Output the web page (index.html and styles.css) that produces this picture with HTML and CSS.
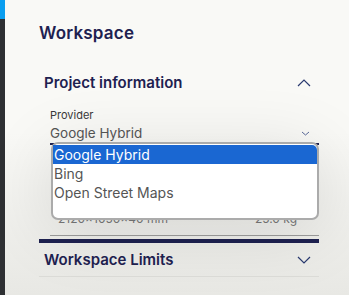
FILE: index.html
```html
<!DOCTYPE html>
<html lang="en">
<head>
    <meta charset="UTF-8">
    <meta name="viewport" content="width=device-width, initial-scale=1.0">
    <title>Workspace</title>
    <link rel="stylesheet" href="styles.css">
</head>
<body>
    <div class="rail"><div class="rail-active"></div></div>
    <div class="panel">
        <h1>Workspace</h1>

        <div class="section open">
            <div class="section-head">
                <span>Project information</span>
                <svg class="chev" width="14" height="8" viewBox="0 0 14 8"><path d="M1 7 L7 1 L13 7" fill="none" stroke="#2a3a70" stroke-width="1.2"/></svg>
            </div>
            <div class="field">
                <label>Provider</label>
                <div class="select">
                    <span>Google Hybrid</span>
                    <svg width="9" height="5" viewBox="0 0 9 5"><path d="M1 1 L4.5 4 L8 1" fill="none" stroke="#5a6a9a" stroke-width="1"/></svg>
                </div>
                <ul class="options">
                    <li class="selected">Google Hybrid</li>
                    <li>Bing</li>
                    <li>Open Street Maps</li>
                </ul>
            </div>
            <div class="spec">
                <span>2120×1050×40 mm</span>
                <span>25.0 kg</span>
            </div>
        </div>

        <div class="section">
            <div class="section-head">
                <span>Workspace Limits</span>
                <svg class="chev" width="14" height="8" viewBox="0 0 14 8"><path d="M1 1 L7 7 L13 1" fill="none" stroke="#2a3a70" stroke-width="1.2"/></svg>
            </div>
        </div>
    </div>
</body>
</html>
```

FILE: styles.css
```css
body {
    margin: 0;
    height: 295px;
    display: flex;
    font-family: Inter, "Noto Sans", sans-serif;
    color: #1e2150;
    overflow: hidden;
}
.rail {
    width: 5px;
    background-color: #2e3033;
}
.rail-active {
    height: 19px;
    background-color: #0a9ef0;
}
.panel {
    flex: 1;
    background: linear-gradient(180deg, #f9f9f6 45%, #e8e8e4 100%);
    padding: 23px 30px 0 34px;
}
h1 {
    font-size: 17px;
    font-weight: 600;
    margin: 0 0 23px 0;
    letter-spacing: 0.2px;
}
.section {
    border-top: 2px solid #1e2150;
}
.section.open {
    border-top: none;
    border-bottom: 2px solid #1e2150;
    padding-bottom: 3px;
}
.section-head {
    display: flex;
    justify-content: space-between;
    align-items: center;
    padding: 0 8px 0 5px;
    height: 33px;
    font-size: 15px;
    font-weight: 600;
}
.section + .section .section-head {
    border-bottom: 1px solid #dcdcd8;
}
.field {
    position: relative;
    margin: 9px 0 0 11px;
}
.field label {
    display: block;
    font-size: 11px;
    color: #3a3a3a;
}
.select {
    display: flex;
    justify-content: space-between;
    align-items: center;
    padding: 3px 9px 2px 0;
    border-bottom: 2px solid #1e2150;
    font-size: 13.5px;
    color: #555;
}
.options {
    position: absolute;
    top: 34px;
    left: 1px;
    right: 0;
    height: 73px;
    margin: 0;
    padding: 1px 0 0 0;
    list-style: none;
    background: #fff;
    border: 2px solid #ababab;
    border-radius: 7px;
    box-shadow: 0 10px 70px rgba(0, 0, 0, 0.12);
    font-size: 14px;
    color: #555;
}
.options li {
    height: 19px;
    line-height: 19px;
    padding-left: 1px;
}
.options li.selected {
    background-color: #1a67d2;
    color: #fff;
    border-top-right-radius: 5px;
}
.spec {
    display: flex;
    justify-content: space-between;
    margin: 66px 0 0 11px;
    padding: 0 22px 9px 8px;
    border-bottom: 1px solid #9c9c9c;
    font-size: 12px;
    color: #777;
}
```
